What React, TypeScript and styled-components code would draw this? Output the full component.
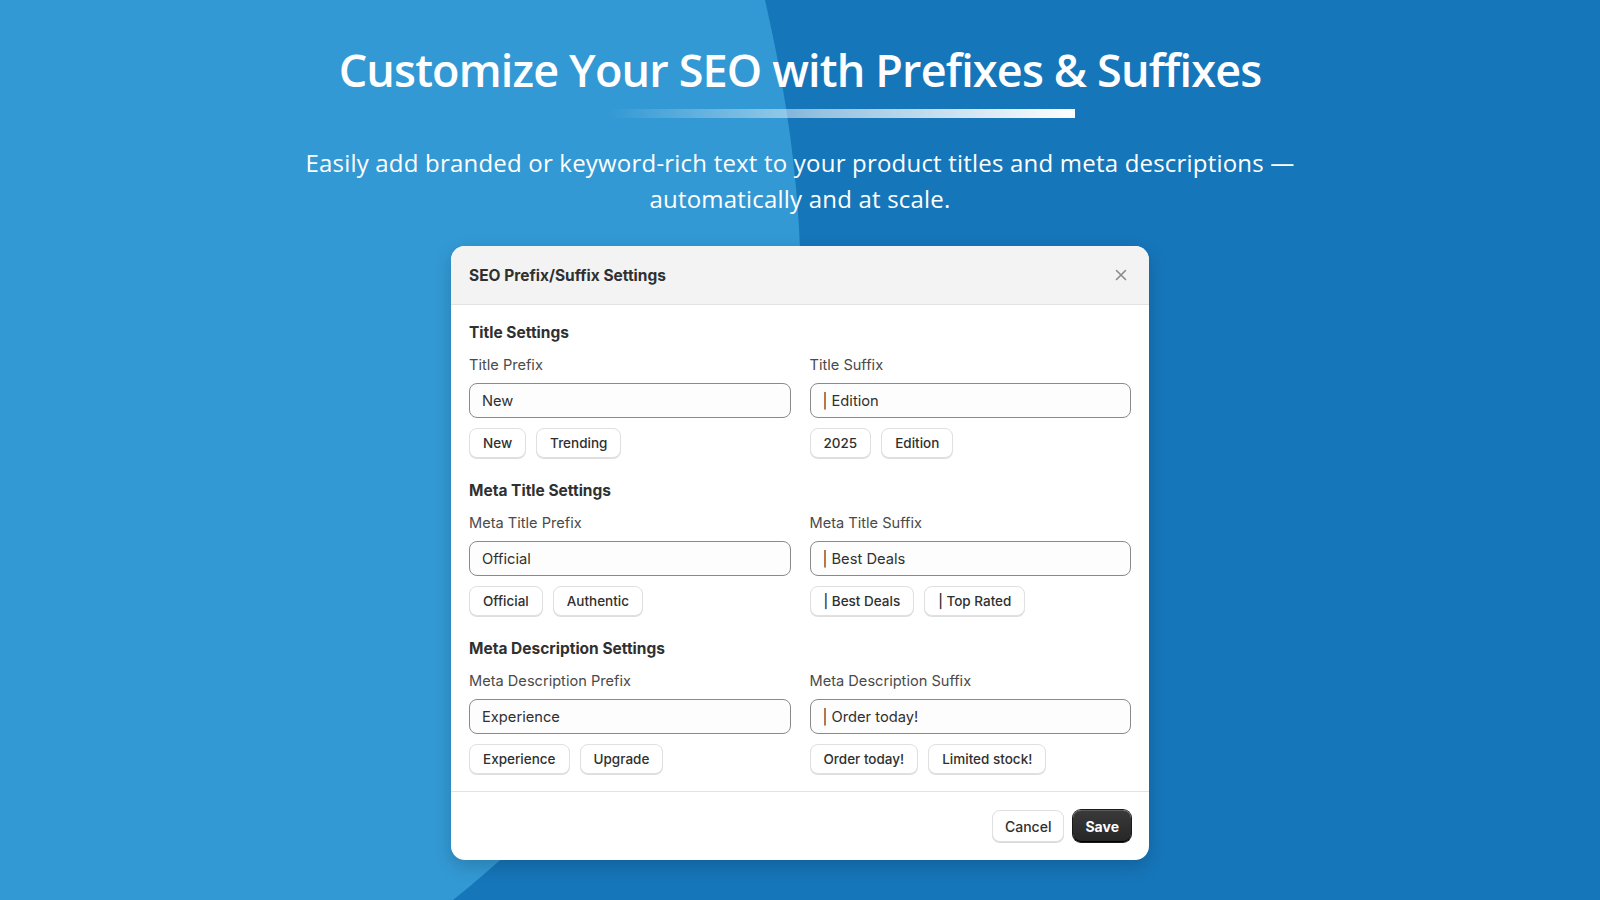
import React from 'react';
import styled, { createGlobalStyle } from 'styled-components';

const GlobalStyle = createGlobalStyle`
  html, body {
    margin: 0;
    padding: 0;
  }
  body {
    font-family: 'Inter', 'Liberation Sans', sans-serif;
    -webkit-font-smoothing: antialiased;
  }
  * {
    box-sizing: border-box;
  }
`;

interface FieldData {
  label: string;
  value: string;
  chips: string[];
}

interface SectionData {
  title: string;
  prefix: FieldData;
  suffix: FieldData;
}

const sections: SectionData[] = [
  {
    title: 'Title Settings',
    prefix: { label: 'Title Prefix', value: 'New', chips: ['New', 'Trending'] },
    suffix: { label: 'Title Suffix', value: '| Edition', chips: ['2025', 'Edition'] },
  },
  {
    title: 'Meta Title Settings',
    prefix: { label: 'Meta Title Prefix', value: 'Official', chips: ['Official', 'Authentic'] },
    suffix: { label: 'Meta Title Suffix', value: '| Best Deals', chips: ['| Best Deals', '| Top Rated'] },
  },
  {
    title: 'Meta Description Settings',
    prefix: { label: 'Meta Description Prefix', value: 'Experience', chips: ['Experience', 'Upgrade'] },
    suffix: { label: 'Meta Description Suffix', value: '| Order today!', chips: ['Order today!', 'Limited stock!'] },
  },
];

const Field = ({ label, value, chips }: FieldData) => (
  <FieldWrap>
    <Label>{label}</Label>
    <Input type="text" defaultValue={value} readOnly />
    <ChipRow>
      {chips.map((c) => (
        <Chip key={c} type="button">
          {c}
        </Chip>
      ))}
    </ChipRow>
  </FieldWrap>
);

const App = () => {
  return (
    <Page>
      <GlobalStyle />
      <Backdrop viewBox="0 0 1600 900" preserveAspectRatio="none" aria-hidden>
        <path d="M0 0 L765 0 C790 110 801 200 801 300 C801 480 700 700 453 900 L0 900 Z" fill="#3399d4" />
      </Backdrop>
      <Content>
        <Heading>Customize Your SEO with Prefixes &amp; Suffixes</Heading>
        <BarRow>
          <Bar />
        </BarRow>
        <Subtitle>
          Easily add branded or keyword-rich text to your product titles and meta descriptions —
          <br />
          automatically and at scale.
        </Subtitle>

        <Modal>
          <ModalHeader>
            <ModalTitle>SEO Prefix/Suffix Settings</ModalTitle>
            <CloseButton type="button" aria-label="Close">
              <svg width="12" height="12" viewBox="0 0 12 12">
                <path d="M1.5 1.5 L10.5 10.5 M10.5 1.5 L1.5 10.5" stroke="#8a8a8a" strokeWidth="1.6" strokeLinecap="round" />
              </svg>
            </CloseButton>
          </ModalHeader>

          <ModalBody>
            {sections.map((s) => (
              <Section key={s.title}>
                <SectionTitle>{s.title}</SectionTitle>
                <FieldGrid>
                  <Field {...s.prefix} />
                  <Field {...s.suffix} />
                </FieldGrid>
              </Section>
            ))}
          </ModalBody>

          <ModalFooter>
            <SecondaryButton type="button">Cancel</SecondaryButton>
            <PrimaryButton type="button">Save</PrimaryButton>
          </ModalFooter>
        </Modal>
      </Content>
    </Page>
  );
};

const Page = styled.div`
  position: relative;
  width: 100%;
  height: 900px;
  overflow: hidden;
  background: #1676ba;
`;

const Backdrop = styled.svg`
  position: absolute;
  inset: 0;
  width: 100%;
  height: 100%;
  z-index: 0;
`;

const Content = styled.div`
  position: relative;
  z-index: 1;
  display: flex;
  flex-direction: column;
  align-items: center;
  padding-top: 42px;
`;

const Heading = styled.h1`
  margin: 0;
  font-family: 'Open Sans', 'Liberation Sans', sans-serif;
  font-weight: 600;
  font-size: 45px;
  line-height: 55px;
  color: #ffffff;
  letter-spacing: -0.85px;
`;

const BarRow = styled.div`
  display: flex;
  justify-content: center;
  width: 100%;
  margin-top: 12px;
`;

const Bar = styled.div`
  width: 466px;
  height: 9px;
  margin-left: 84px;
  background: linear-gradient(90deg, rgba(255, 255, 255, 0) 0%, rgba(255, 255, 255, 0.55) 45%, #ffffff 100%);
`;

const Subtitle = styled.p`
  margin: 27px 0 0;
  font-family: 'Open Sans', 'Liberation Sans', sans-serif;
  font-weight: 400;
  font-size: 24px;
  line-height: 36px;
  letter-spacing: 0.2px;
  color: #ffffff;
  text-align: center;
`;

const Modal = styled.div`
  margin-top: 29px;
  width: 698px;
  background: #ffffff;
  border-radius: 14px;
  overflow: hidden;
  box-shadow: 0 6px 18px rgba(0, 0, 0, 0.18);
`;

const ModalHeader = styled.div`
  display: flex;
  align-items: center;
  justify-content: space-between;
  height: 59px;
  padding: 0 18px;
  background: #f3f3f3;
  border-bottom: 1px solid #e3e3e3;
`;

const ModalTitle = styled.h2`
  margin: 0;
  font-size: 15.5px;
  font-weight: 650;
  color: #303030;
`;

const CloseButton = styled.button`
  display: flex;
  align-items: center;
  justify-content: center;
  width: 24px;
  height: 24px;
  margin-right: -2px;
  padding: 0;
  border: none;
  background: transparent;
  cursor: pointer;
`;

const ModalBody = styled.div`
  display: flex;
  flex-direction: column;
  gap: 23px;
  padding: 18px 18px 17px;
`;

const Section = styled.section`
  display: flex;
  flex-direction: column;
  gap: 12px;
`;

const SectionTitle = styled.h3`
  margin: 0;
  font-size: 15.5px;
  line-height: 20px;
  font-weight: 650;
  color: #303030;
`;

const FieldGrid = styled.div`
  display: grid;
  grid-template-columns: 1fr 1fr;
  column-gap: 19px;
`;

const FieldWrap = styled.div`
  display: flex;
  flex-direction: column;
`;

const Label = styled.label`
  font-size: 14.6px;
  line-height: 20px;
  color: #4a4a4a;
`;

const Input = styled.input`
  margin-top: 8px;
  height: 35px;
  padding: 0 12px;
  border: 1px solid #8a8a8a;
  border-radius: 8px;
  background: #fdfdfd;
  font-family: 'Inter', 'Liberation Sans', sans-serif;
  font-size: 14.7px;
  color: #303030;
  outline: none;
`;

const ChipRow = styled.div`
  display: flex;
  gap: 10px;
  margin-top: 10px;
`;

const Chip = styled.button`
  height: 30px;
  padding: 0 13px;
  border: 1px solid #e0e0e0;
  border-radius: 8px;
  background: #ffffff;
  box-shadow: 0 1px 0 rgba(0, 0, 0, 0.13);
  font-family: 'Inter', 'Liberation Sans', sans-serif;
  font-size: 13.5px;
  font-weight: 550;
  color: #303030;
  cursor: pointer;
`;

const ModalFooter = styled.div`
  display: flex;
  justify-content: flex-end;
  gap: 9px;
  padding: 18px;
  border-top: 1px solid #e3e3e3;
`;

const SecondaryButton = styled.button`
  height: 32px;
  padding: 0 12px;
  border: 1px solid #e0e0e0;
  border-radius: 8px;
  background: #ffffff;
  box-shadow: 0 1px 0 rgba(0, 0, 0, 0.15);
  font-family: 'Inter', 'Liberation Sans', sans-serif;
  font-size: 14px;
  font-weight: 550;
  color: #303030;
  cursor: pointer;
`;

const PrimaryButton = styled.button`
  height: 32px;
  padding: 0 12px;
  border: none;
  border-radius: 8px;
  background: linear-gradient(180deg, #3a3a3a 0%, #262626 100%);
  box-shadow: inset 0 1px 0 rgba(255, 255, 255, 0.18), inset 0 -1px 0 #000000, 0 0 0 1px #1a1a1a;
  font-family: 'Inter', 'Liberation Sans', sans-serif;
  font-size: 14px;
  font-weight: 650;
  color: #ffffff;
  cursor: pointer;
`;

export default App;
